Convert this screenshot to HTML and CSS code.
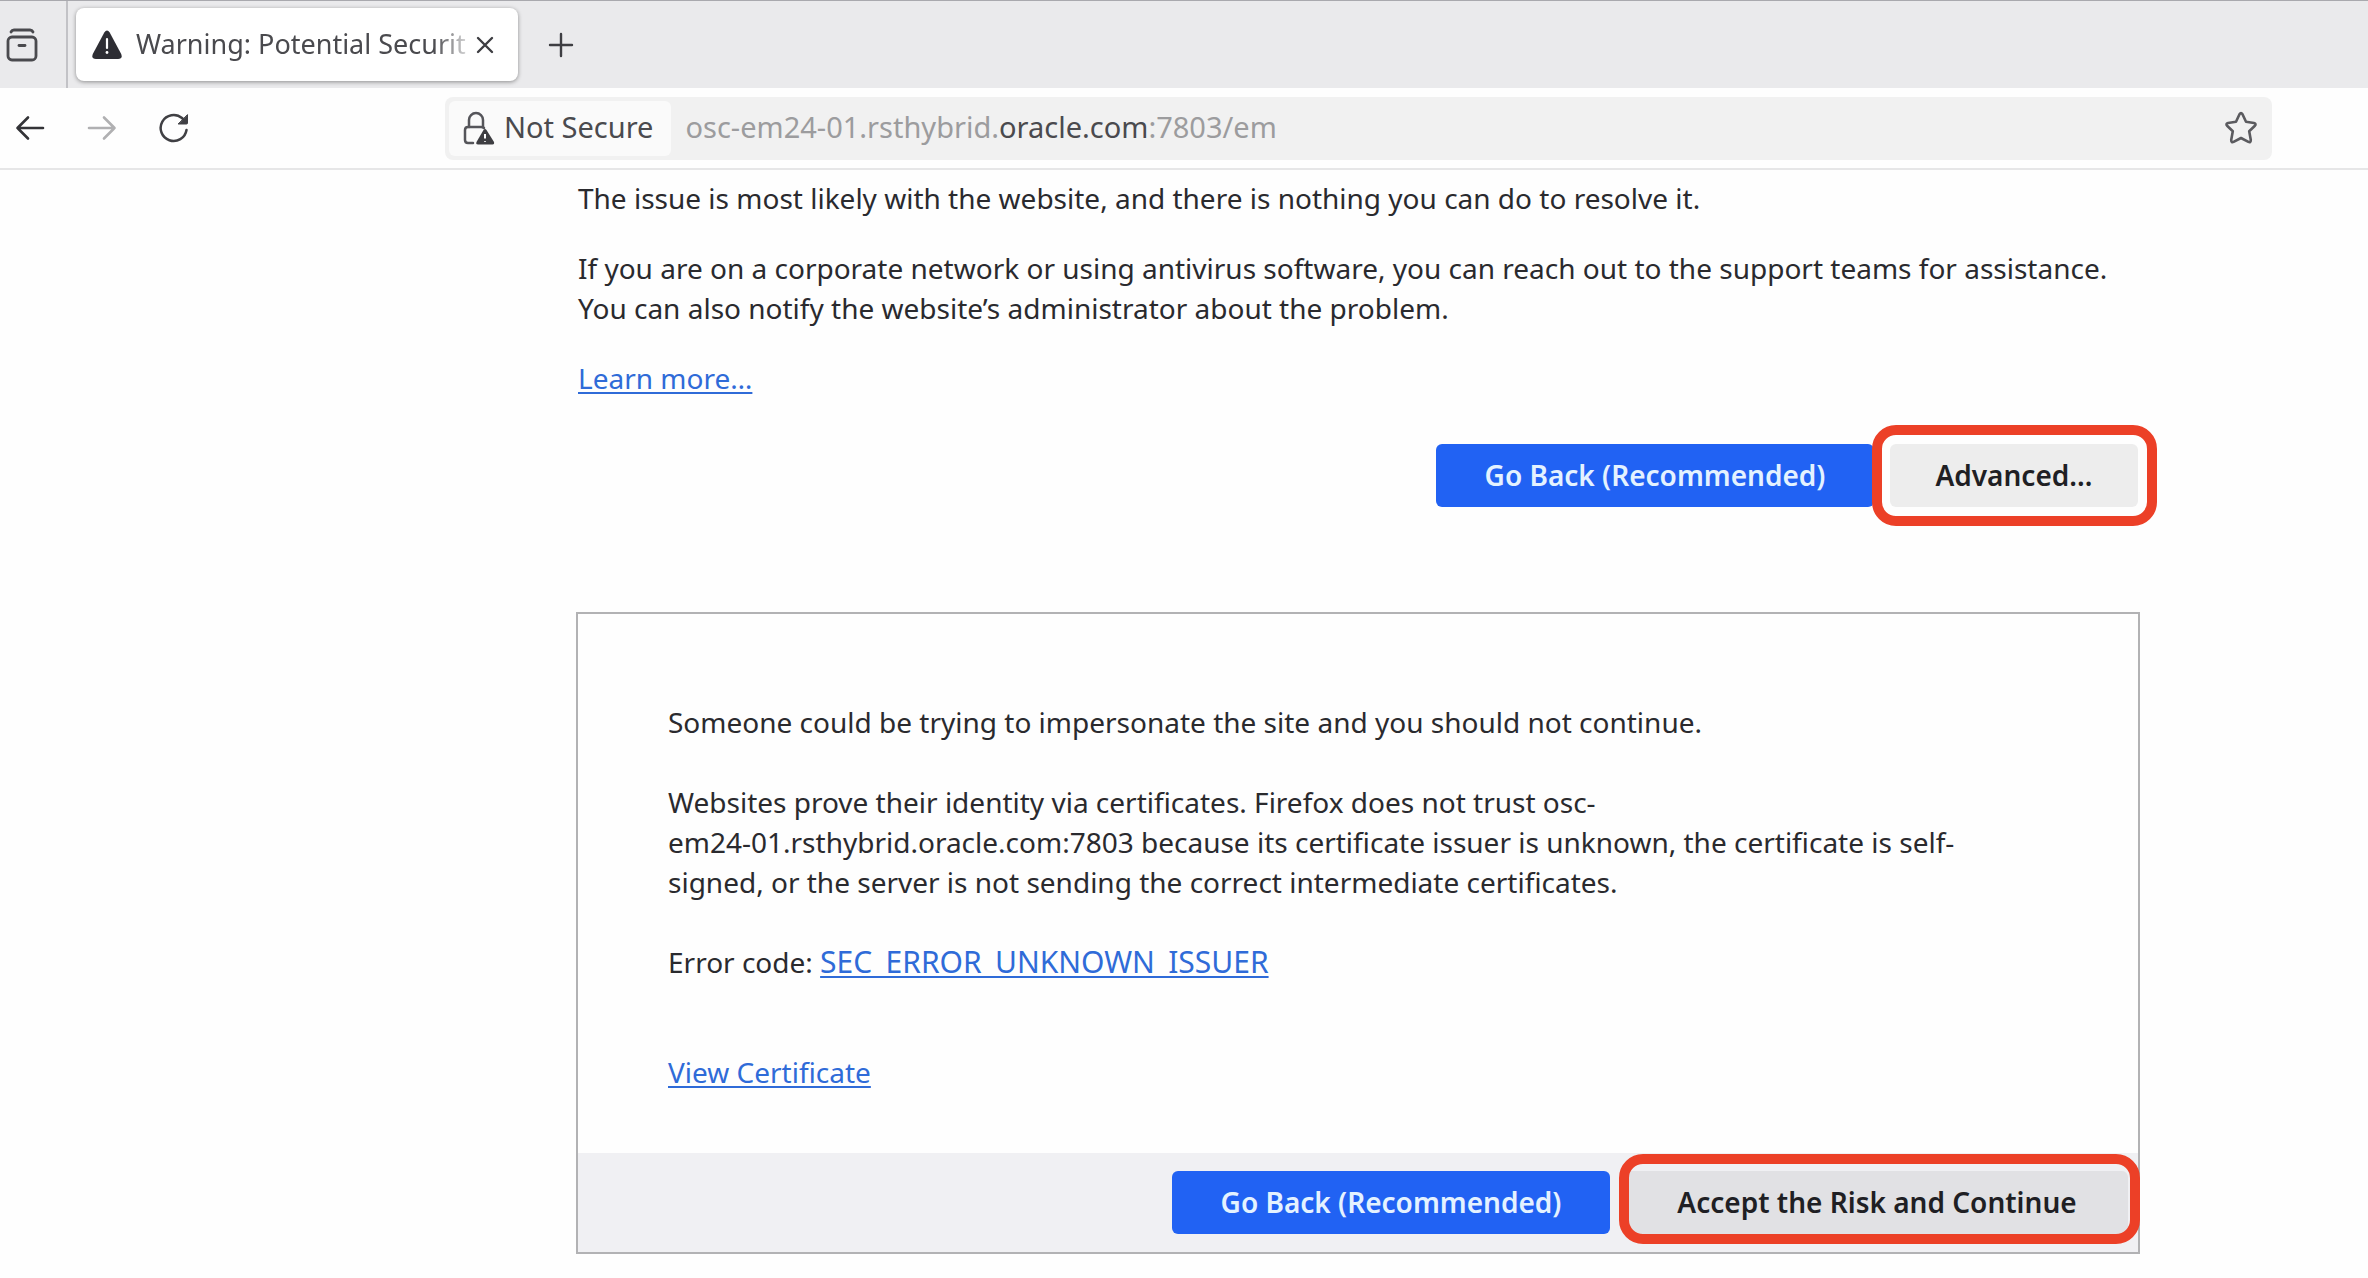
FILE: index.html
```html
<!DOCTYPE html>
<html lang="en">
<head>
<meta charset="utf-8">
<title>Warning: Potential Security Risk Ahead</title>
<link rel="stylesheet" href="styles.css">
</head>
<body>
<header>
  <div class="tabstrip">
    <button class="icon-button archive" aria-label="Recent browsing">
      <svg width="32" height="34" viewBox="0 0 32 34" fill="none" stroke="#4a4a4e" stroke-width="2.800" stroke-linecap="round" stroke-linejoin="round"><path d="M5 4Q6 2 8 2H24Q26 2 27 4"/><rect x="2" y="9" width="28" height="23" rx="4"/><path d="M13 17.500H19"/></svg>
    </button>
    <div class="tab">
      <svg width="30" height="30" viewBox="0 0 30 30"><path d="M12.300 2.500Q15-1.500 17.700 2.500L29.200 24Q31 29 26 29H4Q-1 29 .8 24Z" fill="#2e2e34"/><path d="M15 9V18" stroke="#fff" stroke-width="2.200" stroke-linecap="round"/><circle cx="15" cy="22.500" r="1.400" fill="#fff"/></svg>
      <span class="tab-title">Warning: Potential Securit</span>
      <button class="icon-button" aria-label="Close tab">
        <svg width="18" height="18" viewBox="0 0 18 18" stroke="#3e3e42" stroke-width="2.400" stroke-linecap="round"><path d="M2 2L16 16M16 2L2 16"/></svg>
      </button>
    </div>
    <button class="icon-button new-tab" aria-label="New tab">
      <svg width="26" height="26" viewBox="0 0 26 26" stroke="#3e3e42" stroke-width="2.400" stroke-linecap="round"><path d="M13 2V24M2 13H24"/></svg>
    </button>
  </div>
  <div class="toolbar">
    <nav class="nav-buttons">
      <button class="icon-button" aria-label="Back">
        <svg width="30" height="26" viewBox="0 0 30 26" fill="none" stroke="#333337" stroke-width="2.600" stroke-linecap="round" stroke-linejoin="round"><path d="M13 2.500L2.500 13L13 23.500M2.500 13H28"/></svg>
      </button>
      <button class="icon-button" aria-label="Forward" disabled>
        <svg width="30" height="26" viewBox="0 0 30 26" fill="none" stroke="#b0b0b2" stroke-width="2.600" stroke-linecap="round" stroke-linejoin="round"><path d="M17 2.500L27.500 13L17 23.500M27.500 13H2"/></svg>
      </button>
      <button class="icon-button" aria-label="Reload">
        <svg width="30" height="30" viewBox="0 0 30 30" fill="none" stroke="#404044" stroke-width="2.500" stroke-linecap="round"><path d="M27.500 17A13 13 0 1 1 23 5L26 8"/><path d="M28.500 2V10Q28.500 11 27.500 11H19.500Z" fill="#404044" stroke-width="1"/></svg>
      </button>
    </nav>
    <div class="urlbar">
      <button class="identity">
        <svg width="32" height="34" viewBox="0 0 32 34"><g fill="none" stroke="#55555a" stroke-width="2.500" stroke-linecap="round"><path d="M6 16V9A7 7 0 0 1 20 9V16"/><path d="M10 32H5Q2 32 2 29V19Q2 16 5 16H18Q20 16 21 17"/></g><path d="M20.500 19Q22 17 23.500 19L31 31Q31.500 33.500 29.500 33.500H15Q12.500 33.500 13.500 31Z" fill="#3e3e42"/><path d="M22 23V27.500M22 30.200V31" stroke="#fff" stroke-width="2"/></svg>
        <span>Not Secure</span>
      </button>
      <div class="url">osc-em24-01.rsthybrid.<span class="domain">oracle.com</span>:7803/em</div>
      <button class="icon-button" aria-label="Bookmark this page">
        <svg width="34" height="34" viewBox="0 0 34 34" fill="none" stroke="#5b5b5f" stroke-width="2.600" stroke-linejoin="round"><path d="M15.500 3.200Q17 1 18.500 3.200L22 10.800L30 12Q32.600 12.700 30.900 14.800L25.200 20.300L26.800 29Q26.800 31.800 24.400 30.900L17 27L9.600 30.900Q7.200 31.800 7.200 29L8.800 20.300L3.100 14.800Q1.400 12.700 4 12L12 10.800Z"/></svg>
      </button>
    </div>
  </div>
</header>
<main>
  <p>The issue is most likely with the website, and there is nothing you can do to resolve it.</p>
  <p>If you are on a corporate network or using antivirus software, you can reach out to the support teams for assistance. You can also notify the website’s administrator about the problem.</p>
  <p><a href="#">Learn more…</a></p>
  <div class="actions">
    <button class="button primary">Go Back (Recommended)</button>
    <div class="highlighted"><button class="button">Advanced…</button></div>
  </div>
  <section class="panel">
    <div class="details">
      <p>Someone could be trying to impersonate the site and you should not continue.</p>
      <p>Websites prove their identity via certificates. Firefox does not trust osc-em24-&NoBreak;01.rsthybrid.oracle.com:7803 because its certificate issuer is unknown, the certificate is self-signed, or the server is not sending the correct intermediate certificates.</p>
      <p>Error code: <a class="error-code" href="#">SEC_ERROR_UNKNOWN_ISSUER</a></p>
      <p class="certificate"><a href="#">View Certificate</a></p>
    </div>
    <div class="actions panel-actions">
      <button class="button primary">Go Back (Recommended)</button>
      <div class="highlighted accept"><button class="button">Accept the Risk and Continue</button></div>
    </div>
  </section>
</main>
</body>
</html>
```
FILE: styles.css
```css
* { box-sizing: border-box; }
body {
  margin: 0;
  background: #fefefe;
  color: #2a2a2e;
  font: 28px/40px "Noto Sans", "Open Sans", sans-serif;
}
button { font: inherit; color: inherit; border: 0; background: none; padding: 0; }
svg { display: block; flex: none; }
p { margin: 0; }
a { color: #2f6bd8; text-decoration-thickness: 2px; text-underline-offset: 3px; }
.icon-button { display: flex; align-items: center; justify-content: center; flex: none; }

.tabstrip {
  display: flex;
  align-items: center;
  height: 88px;
  background: #eaeaec;
  border-top: 1px solid #a9a9ae;
}
.archive { width: 68px; height: 100%; padding-right: 22px; border-right: 2px solid #c2c2c6; }
.tab {
  display: flex;
  align-items: center;
  width: 442px;
  height: 73px;
  margin-left: 8px;
  padding: 0 24px 0 16px;
  background: #fff;
  border-radius: 8px;
  box-shadow: 0 1px 4px #0006;
}
.tab-title {
  flex: 1;
  padding: 0 0 2px 14px;
  white-space: nowrap;
  font-size: 27px;
  color: #4a4a4e;
  mask-image: linear-gradient(to right, #000 88%, transparent 100%);
}
.new-tab { margin-left: 30px; }

.toolbar {
  display: flex;
  align-items: center;
  height: 82px;
  padding: 0 96px 0 15px;
  border-bottom: 2px solid #e6e6e7;
  background: #fefefe;
}
.nav-buttons { display: flex; gap: 42px; width: 430px; flex: none; }
.urlbar {
  display: flex;
  align-items: center;
  flex: 1;
  height: 63px;
  padding: 4px 14px 4px 4px;
  background: #f1f1f1;
  border-radius: 8px;
  font-size: 29px;
}
.identity {
  display: flex;
  align-items: center;
  gap: 9px;
  height: 100%;
  padding: 0 18px 0 14px;
  background: #fafafa;
  border-radius: 6px;
  color: #4a4a4e;
}
.identity span { padding-bottom: 2px; }
.url { flex: 1; padding: 0 0 2px 14px; color: #9c9c9e; }
.domain { color: #4a4a4e; }

main {
  display: flex;
  flex-direction: column;
  gap: 30px;
  padding: 8px 228px 20px 576px;
}
main > p { padding-left: 2px; }
.actions { display: flex; justify-content: flex-end; gap: 16px; }
main > .actions { padding: 16px 2px 75px; }
.button {
  min-width: 248px;
  height: 63px;
  padding: 0 44px 2px;
  background: #ededed;
  border-radius: 6px;
  color: #1f1f24;
  font-weight: 600;
  white-space: nowrap;
}
.primary { min-width: 438px; background: #2162f3; color: #e4f2ff; }
.highlighted { position: relative; display: flex; }
.highlighted::after {
  content: "";
  position: absolute;
  inset: -19px -19px -19px -18px;
  border: 10px solid #ec4027;
  border-radius: 24px;
  pointer-events: none;
}
.panel { border: 2px solid #b2b2b4; }
.details {
  display: flex;
  flex-direction: column;
  gap: 40px;
  padding: 88px 150px 61px 90px;
}
.error-code { font-size: 30px; }
.certificate { padding-top: 30px; }
.panel-actions { padding: 18px 10px; background: #f0f0f3; }
.accept .button { min-width: 502px; background: #e1e1e4; }
.accept::after { inset: -17px -12px -10px -7px; }
```
